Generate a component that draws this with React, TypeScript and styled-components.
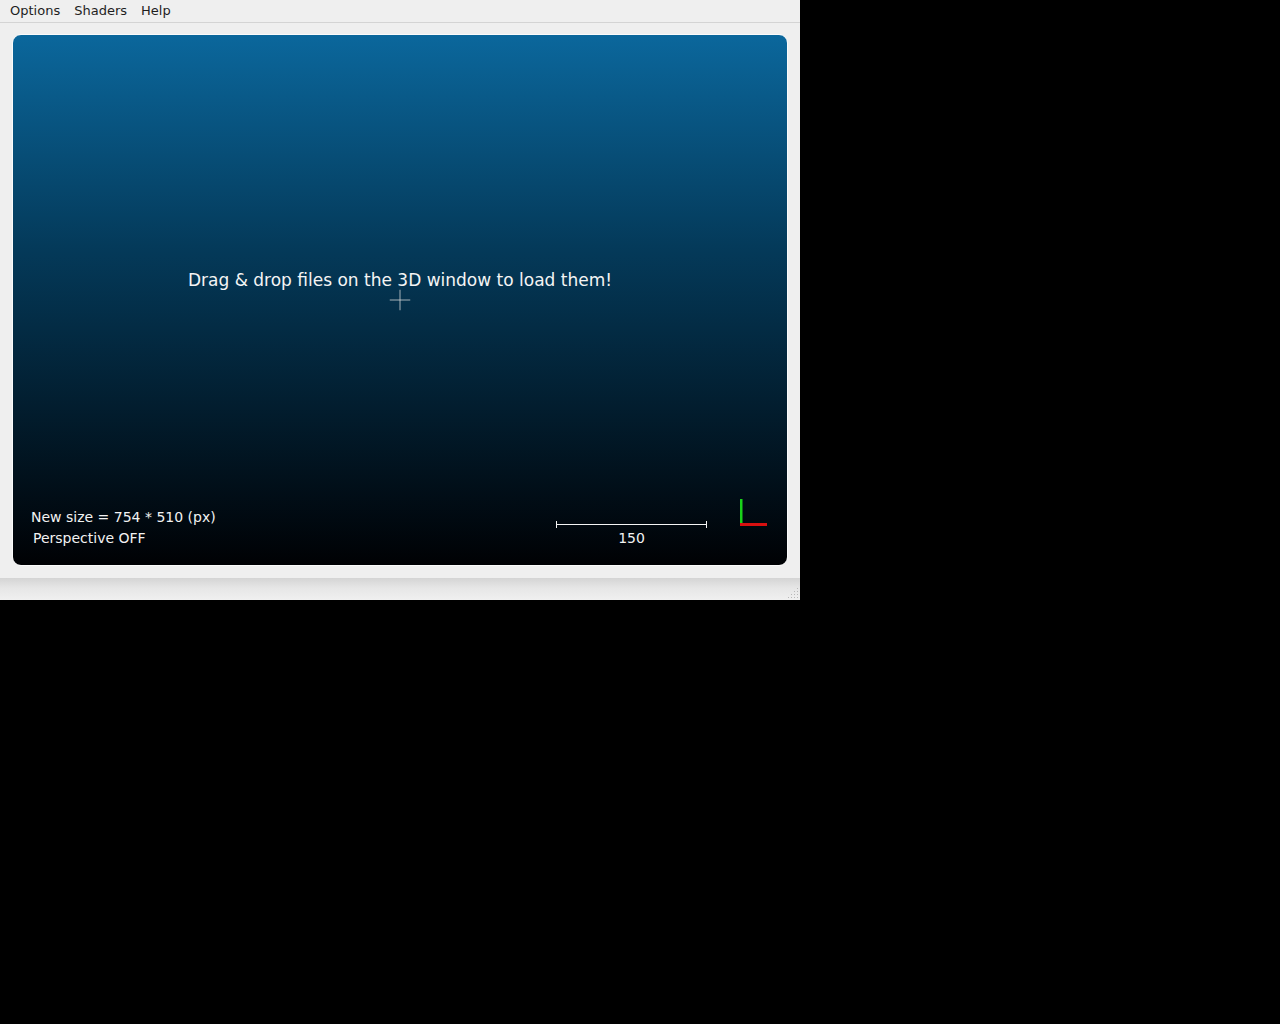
import React from "react";
import styled, { createGlobalStyle } from "styled-components";

const Global = createGlobalStyle`
  html, body { margin: 0; padding: 0; background: #000; }
  body { font-family: "DejaVu Sans", "Liberation Sans", sans-serif; }
`;

const Window = styled.div`
  width: 800px;
  height: 600px;
  background: #efefef;
  display: flex;
  flex-direction: column;
`;

const MenuBar = styled.div`
  height: 22px;
  border-bottom: 1px solid #d4d4d4;
  display: flex;
  align-items: center;
  padding-left: 3px;
  background: #efefef;
`;

const MenuItem = styled.span`
  font-size: 13px;
  color: #1e1e1e;
  padding: 0 7px;
  line-height: 20px;
`;

const Main = styled.div`
  flex: 1;
  padding: 11px 12px 12px 12px;
  display: flex;
`;

const Viewport = styled.div`
  position: relative;
  flex: 1;
  border: 1.5px solid #fbfbfb;
  border-radius: 9px;
  background: linear-gradient(to bottom, #0b679c 0%, #043a5a 40%, #000104 100%);
  display: flex;
  flex-direction: column;
  color: #f2f2f2;
  overflow: hidden;
`;

const Message = styled.div`
  margin-top: 234px;
  text-align: center;
  font-size: 17px;
  line-height: 22px;
  color: #f4f4f4;
`;

const Spacer = styled.div`
  flex: 1;
`;

const BottomRow = styled.div`
  display: flex;
  align-items: flex-end;
  padding-bottom: 16px;
`;

const Info = styled.div`
  flex: 1;
  padding-left: 18px;
  display: flex;
  flex-direction: column;
`;

const InfoLine = styled.div<{ $indent?: number }>`
  font-size: 14px;
  line-height: 21px;
  padding-left: ${(p) => p.$indent ?? 0}px;
  color: #f2f2f2;
`;

const Scale = styled.div`
  width: 151px;
  margin-right: 33px;
  display: flex;
  flex-direction: column;
  align-items: center;
`;

const ScaleLabel = styled.div`
  font-size: 14px;
  line-height: 21px;
  color: #f2f2f2;
`;

const Axes = styled.svg`
  margin-right: 19px;
  margin-bottom: 22px;
  display: block;
`;

const Crosshair = styled.svg`
  position: absolute;
  left: 50%;
  top: 50%;
  transform: translate(-50%, -50%);
`;

const StatusBar = styled.div`
  height: 22px;
  background: linear-gradient(to bottom, #d4d4d4 0%, #e6e6e6 45%, #f0f0f0 100%);
  display: flex;
  justify-content: flex-end;
  align-items: flex-end;
`;

const Grip = styled.svg`
  display: block;
  margin: 0 1px 1px 0;
`;

export default function App() {
  return (
    <>
      <Global />
      <Window>
        <MenuBar>
          <MenuItem>Options</MenuItem>
          <MenuItem>Shaders</MenuItem>
          <MenuItem>Help</MenuItem>
        </MenuBar>
        <Main>
          <Viewport>
            <Message>Drag &amp; drop files on the 3D window to load them!</Message>
            <Spacer />
            <BottomRow>
              <Info>
                <InfoLine>New size = 754 * 510 (px)</InfoLine>
                <InfoLine $indent={2}>Perspective OFF</InfoLine>
              </Info>
              <Scale>
                <svg width="151" height="8" viewBox="0 0 151 8">
                  <line x1="0.5" y1="4.5" x2="150.5" y2="4.5" stroke="#f4f4f4" strokeWidth="1" />
                  <line x1="0.5" y1="1" x2="0.5" y2="8" stroke="#f4f4f4" strokeWidth="1" />
                  <line x1="150.5" y1="1" x2="150.5" y2="8" stroke="#f4f4f4" strokeWidth="1" />
                </svg>
                <ScaleLabel>150</ScaleLabel>
              </Scale>
              <Axes width="28" height="28" viewBox="0 0 28 28">
                <rect x="0" y="0" width="2.5" height="26" fill="#19d119" />
                <rect x="0" y="24" width="27" height="3" fill="#d81010" />
              </Axes>
            </BottomRow>
            <Crosshair width="21" height="21" viewBox="0 0 21 21">
              <line x1="0" y1="10.5" x2="21" y2="10.5" stroke="rgba(220,220,220,0.75)" strokeWidth="1" />
              <line x1="10.5" y1="0" x2="10.5" y2="21" stroke="rgba(220,220,220,0.75)" strokeWidth="1" />
            </Crosshair>
          </Viewport>
        </Main>
        <StatusBar>
          <Grip width="12" height="12" viewBox="0 0 12 12">
            {[
              [10, 2], [10, 5], [10, 8], [10, 11],
              [7, 5], [7, 8], [7, 11],
              [4, 8], [4, 11], [1, 11],
            ].map(([x, y], i) => (
              <rect key={i} x={x} y={y - 1} width="1" height="1" fill="#b8b8b8" />
            ))}
          </Grip>
        </StatusBar>
      </Window>
    </>
  );
}
